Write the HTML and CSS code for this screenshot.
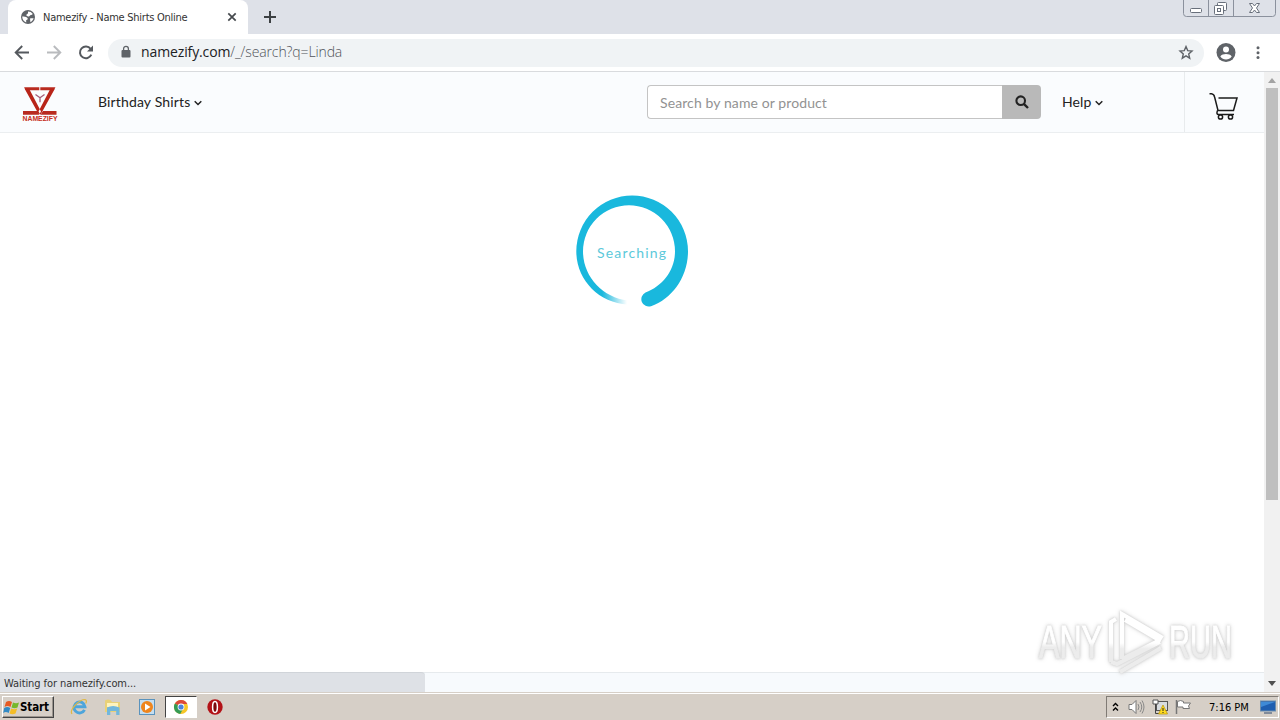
FILE: index.html
```html
<!DOCTYPE html>
<html lang="en">
<head>
    <meta charset="utf-8">
    <title>Namezify - Name Shirts Online</title>
    <link rel="stylesheet" href="styles.css">
</head>
<body>
    <div class="titlebar">
        <div class="tab">
            <svg width="16" height="16" viewBox="0 0 16 16"><circle cx="8" cy="8" r="7" fill="#5f6368"/><path d="M2.2 7.5c2 .2 3.6-.2 5 1.2 1.200 1 .4 2.300-1 2.300v2.400C3.800 12.600 2.200 10.500 2.200 7.500ZM8 2.500c2 0 3.700.8 4.800 2.500-1 1.500-2.500.5-3.200 2-.5 1-2.500 0-3.300-.6-.5-1 1.700-1 1.700-2.400ZM10 9.500c1.500-.5 3-.3 3.600-.2-.4 1.700-1.600 3.200-3.200 4Z" fill="#fff"/></svg>
            <span class="tab-title">Namezify - Name Shirts Online</span>
            <svg class="tab-close" width="10" height="10" viewBox="0 0 10 10"><path d="M1.300 1.300 8.700 8.700M8.700 1.300 1.300 8.700" stroke="#45494d" stroke-width="1.700"/></svg>
        </div>
        <svg class="new-tab" width="12" height="12" viewBox="0 0 12 12"><path d="M6 0v12M0 6h12" stroke="#3c4043" stroke-width="2"/></svg>
        <svg class="window-buttons" width="94" height="18" viewBox="0 0 94 18"><path d="M.5 0v13.500q0 3 3 3h86q3 0 3-3V0M25.500 0v16M50.500 0v16" fill="none" stroke="#8b919d"/><g fill="#fff" stroke="#686f7b"><rect x="7.500" y="8.500" width="11" height="4" rx="1"/><rect x="34.500" y="2.500" width="9" height="8" rx="1"/><rect x="31.500" y="5.500" width="9" height="9" rx="1"/><rect x="34.500" y="8.500" width="3" height="3"/><path d="M66.500 3.500h3l2 2.500 2-2.500h3L73.500 8l3 4.500h-3l-2-2.500-2 2.500h-3l3-4.500Z"/></g></svg>
    </div>

    <div class="toolbar">
        <svg class="nav-icon" width="16" height="16" viewBox="0 0 16 16"><path d="M15 7.500H2M8.200 1 1.700 7.500l6.500 6.500" fill="none" stroke="#55595e" stroke-width="1.900"/></svg>
        <svg class="nav-icon" width="16" height="16" viewBox="0 0 16 16"><path d="M1 7.500h13M7.800 1 14.300 7.500l-6.500 6.500" fill="none" stroke="#b9bbbe" stroke-width="1.900"/></svg>
        <svg class="nav-icon" width="16" height="16" viewBox="0 0 16 16"><path d="M13.300 9.700A5.900 5.900 0 1 1 12.600 3.800" fill="none" stroke="#55595e" stroke-width="2"/><path d="M15 .5v6H9Z" fill="#55595e"/></svg>
        <div class="address">
            <svg class="lock" width="10" height="14" viewBox="0 0 10 14"><rect x=".5" y="5" width="9" height="7.500" rx="1" fill="#5f6368"/><path d="M2.600 5.500V3.700a2.400 2.400 0 0 1 4.800 0v1.800" fill="none" stroke="#5f6368" stroke-width="1.300"/></svg>
            <span class="url"><b>namezify.com</b>/_/search?q=Linda</span>
            <svg class="bookmark" width="16" height="16" viewBox="0 0 16 16"><path d="m8 1.600 1.700 4 4.300.4-3.300 2.900 1 4.300L8 10.900l-3.700 2.300 1-4.300L2 6l4.300-.4Z" fill="none" stroke="#5f6368" stroke-width="1.400"/></svg>
        </div>
        <svg class="profile" width="20" height="20" viewBox="0 0 20 20"><circle cx="10" cy="9.500" r="9.500" fill="#5f6368"/><circle cx="10" cy="6.500" r="3" fill="#fff"/><path d="M4.300 13.500c1-2 3.500-2.600 5.700-2.600s4.700.6 5.700 2.600a7 7 0 0 1-11.400 0Z" fill="#fff"/></svg>
        <svg width="4" height="14" viewBox="0 0 4 14" fill="#5f6368"><circle cx="2" cy="1.800" r="1.500"/><circle cx="2" cy="6.700" r="1.500"/><circle cx="2" cy="11.600" r="1.500"/></svg>
    </div>

    <div class="viewport">
        <div class="page">
            <header class="site-header">
                <svg class="logo" width="36" height="36" viewBox="0 0 36 36">
                    <path d="M2 1.200h15.300v3H4ZM18.300 1.200h15.200l-2 3H18.300ZM1 25h15l1 3.800H1ZM21 25h13.500v3.800H18.500Z" fill="#b92b20"/>
                    <path d="M2.500 2.500H7L19 25.500 17 28.800ZM33 2.500H28.500L16.500 25.500l2 3.300Z" fill="#b82419"/>
                    <path d="m13.500 8.500 4.500 3.200 4.500-3.200M18 11.500v4.800" fill="none" stroke="#a55b78" stroke-width="1.300"/>
                    <text x=".5" y="35" class="logo-text" textLength="35" lengthAdjust="spacingAndGlyphs">NAMEZIFY</text>
                </svg>
                <a class="menu shirts">Birthday Shirts <svg width="8" height="6" viewBox="0 0 8 6"><path d="m.7 1.200 3.300 3.300 3.300-3.300" fill="none" stroke="#222" stroke-width="1.500"/></svg></a>
                <div class="search">
                    <div class="search-input">Search by name or product</div>
                    <div class="search-btn"><svg width="14" height="14" viewBox="0 0 14 14"><circle cx="5.700" cy="5.700" r="4.300" fill="none" stroke="#222" stroke-width="2.100"/><path d="m8.800 8.800 4.200 4.200" stroke="#222" stroke-width="2.400"/></svg></div>
                </div>
                <a class="menu help">Help <svg width="8" height="6" viewBox="0 0 8 6"><path d="m.7 1.200 3.300 3.300 3.300-3.300" fill="none" stroke="#222" stroke-width="1.500"/></svg></a>
                <div class="cart">
                    <svg width="30" height="28" viewBox="0 0 30 28" fill="none" stroke="#1c1c1c" stroke-width="1.500"><path d="M.5 1.700h2Q5 2 5.600 5L9 18.500h15.500L28 6H9.500M8.500 18.500q-1.500 4 1 4H25"/><circle cx="11.500" cy="25" r="2.100" fill="#fff"/><circle cx="21.500" cy="25" r="2.100" fill="#fff"/></svg>
                </div>
            </header>
            <main class="results">
                <svg class="loader" width="116" height="116" viewBox="574 193 116 116">
                    <defs>
                        <linearGradient id="fade" gradientUnits="userSpaceOnUse" x1="602" y1="0" x2="627" y2="0">
                            <stop offset="0" stop-color="#fff" stop-opacity="0"/>
                            <stop offset="1" stop-color="#fff"/>
                        </linearGradient>
                    </defs>
                    <path d="M628 304.500C598 303 576.300 279 576.300 251.300A55.850 55.850 0 0 1 688 251.300C688 277 672 299 651 306.200A7.400 7.400 0 0 1 645.500 292.500C663 286 675 270 675 251.300A46 46 0 0 0 583 251.300C583 276 602 297.500 628 300.500Z" fill="#19b8dd"/>
                    <path d="M602 288h30v20h-30Z" fill="url(#fade)"/>
                    <text x="597" y="258" textLength="69" class="loader-text">Searching</text>
                </svg>
            </main>
            <div class="page-bottom"></div>
        </div>
        <div class="scrollbar">
            <svg width="8" height="5" viewBox="0 0 8 5"><path d="M0 5 4 0l4 5Z" fill="#a3a3a3"/></svg>
            <div class="thumb"></div>
            <svg class="scroll-down" width="8" height="5" viewBox="0 0 8 5"><path d="m0 0 4 5 4-5Z" fill="#505050"/></svg>
        </div>
        <div class="status">Waiting for namezify.com...</div>
        <svg class="watermark" width="220" height="78" viewBox="0 0 220 78">
            <defs>
                <linearGradient id="shade" x1="0" y1="0" x2="0" y2="1">
                    <stop offset=".5" stop-color="#fff"/>
                    <stop offset=".6" stop-color="#ececec"/>
                </linearGradient>
            </defs>
            <g class="watermark-shape">
                <text x="4" y="53" textLength="63" lengthAdjust="spacingAndGlyphs">ANY</text>
                <text x="134" y="53" textLength="63" lengthAdjust="spacingAndGlyphs">RUN</text>
                <path d="M76 57V17l5-3M87 54V9l39 23-2 3-34-20M87 54l38-19M76 57l6 2 43-22M85 67l41-24"/>
            </g>
        </svg>
    </div>

    <div class="taskbar">
        <div class="start">
            <svg width="17" height="15" viewBox="0 0 17 15"><path d="M3 2q3-2 6 0L7.500 7Q4.500 5 1.500 7Z" fill="#e65b25"/><path d="M10 2.500q3 1.500 6 0L14.500 7.500q-3 1.500-6 0Z" fill="#76b82d"/><path d="M1.200 8q3-2 6 0l-1.500 5q-3-2-5.500 0Z" fill="#328ac5"/><path d="M8.200 8.500q3 1.500 6 0L12.500 13.500q-3 1.500-6 0Z" fill="#f4bd27"/></svg>
            <span>Start</span>
        </div>
        <div class="app"><svg width="18" height="18" viewBox="0 0 18 18"><path d="M14.500 11.800A5.500 5.500 0 1 1 15 8.800H5" fill="none" stroke="#4da5db" stroke-width="2.900"/><path d="M2 16C-1 12 9 1.500 15 1.500c2 .5 1.500 2.500.7 4" fill="none" stroke="#dfb844" stroke-width="1.200"/></svg></div>
        <div class="app"><svg width="18" height="18" viewBox="0 0 18 18"><path d="M1 2.500q3-2 6 0l1 1.500h8v10H1Z" fill="#e9d178"/><path d="M3 5h11v4H3Z" fill="#fff4bd"/><path d="M3 17V9.500q6-3 12.500 0V17h-3.300v-4H6.300v4Z" fill="#72b7dc"/></svg></div>
        <div class="app"><svg width="18" height="18" viewBox="0 0 18 18"><rect x="1.500" y="1.500" width="15" height="15" fill="#c5def0" stroke="#5a93bd"/><circle cx="9" cy="9" r="6" fill="#ef851c"/><path d="m7 5.500 5.500 3.500L7 12.500Z" fill="#fff"/></svg></div>
        <div class="app active"><svg width="16" height="16" viewBox="0 0 16 16"><circle cx="8" cy="8" r="7" fill="#f6c628"/><path d="M8 8 1.900 4.500A7 7 0 0 1 14.300 5H8Z" fill="#dc4939"/><path d="M8 8 1.900 4.500A7 7 0 0 0 7.200 15L10 10Z" fill="#359b55"/><circle cx="8" cy="8" r="3.400" fill="#fff"/><circle cx="8" cy="8" r="2.600" fill="#4a83dc"/></svg></div>
        <div class="app"><svg width="16" height="16" viewBox="0 0 16 16"><circle cx="8" cy="8" r="7.700" fill="#b31217"/><ellipse cx="8" cy="8" rx="2.400" ry="5.500" fill="#7d090c" stroke="#fff" stroke-width="1.500"/></svg></div>
        <div class="tray">
            <svg width="7" height="10" viewBox="0 0 7 10"><path d="m1 4 2.500-2.500L6 4M1 8.500 3.500 6 6 8.500" fill="none" stroke="#000" stroke-width="1.400"/></svg>
            <svg class="volume" width="17" height="16" viewBox="0 0 17 16"><path d="M1 5.500h3l4-4v13l-4-4H1Z" fill="#fff" stroke="#777"/><path d="M10 5q2 3 0 6M12 3q3.500 5 0 10M14 1.500q4 6.500 0 13" fill="none" stroke="#888"/></svg>
            <svg class="network" width="16" height="16" viewBox="0 0 16 16"><rect x="4.500" y="2.500" width="11" height="9" fill="#d8dce0" stroke="#555"/><path d="M1 1h5v4H1Z" fill="#fff" stroke="#555"/><path d="M3.500 5v9.500h6" fill="none" stroke="#444"/><path d="m11 6 4.500 9h-9Z" fill="#ffdc20" stroke="#b89200" stroke-width=".7"/><path d="M11 9v3M11 13v1" stroke="#222"/></svg>
            <svg class="flag" width="17" height="16" viewBox="0 0 17 16"><path d="M2.500 2.500q3-2 6 0v1.500h7l-2 3 1 2.500H8V8H2.500Z" fill="#fff" stroke="#777"/><path d="M1.500 1v14" stroke="#777" stroke-width="1.500"/></svg>
            <span class="clock">7:16 PM</span>
            <svg width="16" height="14" viewBox="0 0 16 14"><rect x=".5" y="1" width="15" height="10" fill="#1f5eb0" stroke="#6c8dad"/><path d="M1 2h14L1 7Z" fill="#3f8ad6"/><path d="M4 13h8" stroke="#64748b" stroke-width="1.500"/></svg>
        </div>
    </div>
</body>
</html>
```
FILE: styles.css
```css
* {
    box-sizing: border-box;
}
body {
    margin: 0;
    width: 1280px;
    height: 720px;
    overflow: hidden;
    display: flex;
    flex-direction: column;
    background: #fff;
    font-family: "DejaVu Sans Condensed", "DejaVu Sans", sans-serif;
    font-size: 11px;
    color: #333;
}
svg {
    display: block;
    flex-shrink: 0;
}
.titlebar {
    height: 34px;
    background: #dee1e8;
    display: flex;
    align-items: flex-start;
    padding-left: 8px;
}
.tab {
    width: 240px;
    height: 34px;
    background: #fff;
    border-radius: 8px 8px 0 0;
    display: flex;
    align-items: center;
    padding: 0 11px 0 12px;
}
.tab-title {
    margin-left: 7px;
    letter-spacing: -0.26px;
    white-space: nowrap;
}
.tab-close {
    margin-left: auto;
}
.new-tab {
    margin: 11px 0 0 16px;
}
.window-buttons {
    margin-left: auto;
    margin-right: 3px;
}
.toolbar {
    height: 38px;
    border-bottom: 1px solid #d9dbde;
    display: flex;
    align-items: center;
    padding: 0 20px 0 14px;
}
.nav-icon {
    margin-right: 16px;
}
.address {
    width: 1096px;
    height: 28px;
    margin-left: -2px;
    border-radius: 14px;
    background: #f0f3f5;
    display: flex;
    align-items: center;
    padding: 0 10px 0 13px;
}
.lock {
    margin-bottom: 1px;
}
.url {
    margin: 0 0 2px 10px;
    font: 300 14px "Open Sans", sans-serif;
    letter-spacing: -0.12px;
    color: #50545a;
}
.url b {
    font-weight: 400;
    color: #202124;
}
.bookmark {
    margin-left: auto;
}
.profile {
    margin: 0 20px 0 12px;
}
.viewport {
    height: 620px;
    position: relative;
    display: flex;
}
.page {
    width: 1264px;
    display: flex;
    flex-direction: column;
}
.site-header {
    height: 61px;
    background: #fafcfe;
    border-bottom: 1px solid #ebeef0;
    display: flex;
    align-items: center;
    padding-left: 22px;
    font-family: Lato, sans-serif;
    font-size: 14px;
}
.logo {
    margin-top: 4px;
}
.logo-text {
    font: bold 6.5px "Liberation Sans", sans-serif;
    fill: #c62e20;
}
.menu {
    display: flex;
    align-items: center;
    gap: 4px;
    margin-bottom: 1px;
    color: #222;
    white-space: nowrap;
}
.menu svg {
    margin-top: 2px;
}
.shirts {
    width: 549px;
    margin-left: 40px;
    letter-spacing: 0.15px;
}
.search {
    width: 394px;
    height: 34px;
    display: flex;
}
.search-input {
    flex: 1;
    background: #fff;
    border: 1px solid #c4c4c4;
    border-right: 0;
    border-radius: 4px 0 0 4px;
    padding-left: 12px;
    line-height: 34px;
    letter-spacing: 0.1px;
    color: #929292;
}
.search-btn {
    width: 39px;
    background: #b9b9b9;
    border-radius: 0 4px 4px 0;
    display: flex;
    align-items: center;
    justify-content: center;
}
.help {
    margin-left: 21px;
    letter-spacing: 0.1px;
}
.cart {
    width: 80px;
    height: 60px;
    margin-left: auto;
    border-left: 1px solid #e8ebed;
    padding: 20px 0 0 24px;
}
.results {
    flex: 1;
    padding-top: 60px;
}
.loader {
    margin-left: 574px;
}
.loader-text {
    font: 14px Lato, sans-serif;
    fill: #5cc9da;
}
.page-bottom {
    height: 20px;
    background: #f7fafd;
    border-top: 1px solid #e6eaed;
}
.scrollbar {
    width: 16px;
    background: #f1f1f1;
    display: flex;
    flex-direction: column;
    align-items: center;
    padding: 6px 0;
}
.thumb {
    width: 12px;
    height: 412px;
    margin-top: 5px;
    background: #bfbfbf;
}
.scroll-down {
    margin-top: auto;
}
.status {
    position: absolute;
    left: 0;
    bottom: 0;
    width: 425px;
    height: 20px;
    padding-left: 4px;
    background: #dee1e6;
    border-top: 1px solid #d0d4d9;
    border-radius: 0 4px 0 0;
    line-height: 21px;
    letter-spacing: -0.08px;
}
.watermark {
    position: absolute;
    left: 1035px;
    top: 533px;
}
.watermark-shape {
    fill: url(#shade);
    stroke: url(#shade);
    stroke-width: 4;
    filter: drop-shadow(0 0 1px #ccc) drop-shadow(0 0 2px #ddd);
}
.watermark-shape text {
    font: 46px "Liberation Sans", sans-serif;
    stroke-width: 1;
}
.watermark-shape path {
    fill: none;
}
.taskbar {
    height: 28px;
    background: #d6cfc7;
    border-top: 1px solid #d6cfc7;
    box-shadow: inset 0 1px #fff;
    display: flex;
    align-items: center;
    padding: 1px 0 0 2px;
}
.start {
    width: 52px;
    height: 22px;
    border: 1px solid;
    border-color: #fff #444 #444 #fff;
    box-shadow: inset -1px -1px #9b958e;
    display: flex;
    align-items: center;
    margin-right: 8px;
    color: #000;
    font-size: 11.5px;
    font-weight: bold;
    letter-spacing: -0.1px;
}
.app {
    width: 34px;
    height: 22px;
    display: flex;
    align-items: center;
    justify-content: center;
}
.app.active {
    width: 32px;
    margin: 0 1px;
    background: #fff;
    border: 1px solid;
    border-color: #444 #fff #fff #444;
}
.tray {
    width: 173px;
    height: 22px;
    margin-left: auto;
    margin-right: 1px;
    border: 1px solid;
    border-color: #807b75 #fff #fff #807b75;
    display: flex;
    align-items: center;
    padding-left: 5px;
}
.volume {
    margin-left: 9px;
}
.network, .flag {
    margin-left: 7px;
}
.clock {
    width: 51px;
    margin-left: 17px;
    color: #000;
    white-space: nowrap;
}
```
